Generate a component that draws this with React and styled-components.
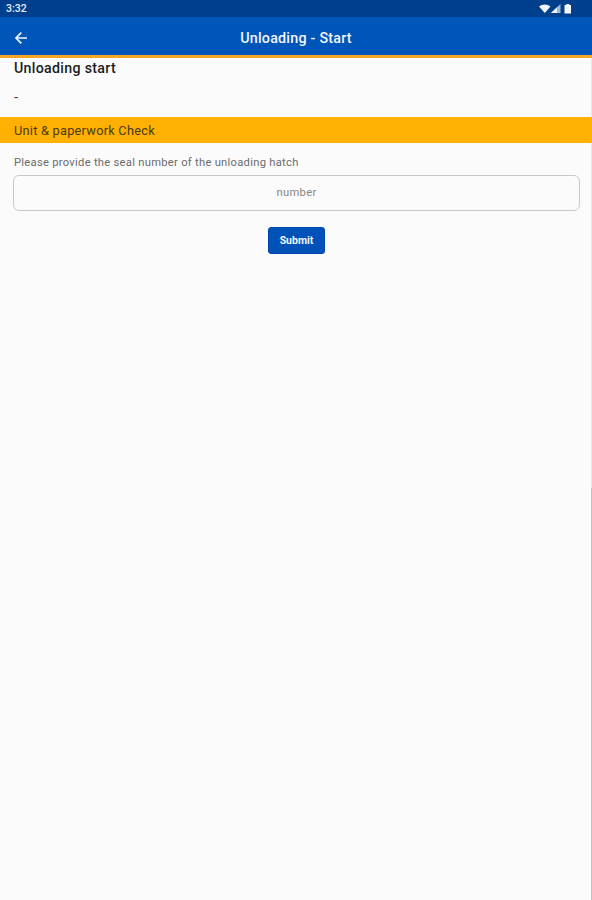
import React, { Component } from "react";
import styled, { createGlobalStyle } from "styled-components";

const GlobalStyle = createGlobalStyle`
  body {
    margin: 0;
    background-color: #fbfbfb;
    font-family: Roboto, sans-serif;
  }

  * {
    box-sizing: border-box;
  }
`

const Root = styled.div`
  width: 100%;
  height: 900px;
  display: flex;
  flex-direction: column;
  background-color: #fbfbfb;
  border-right: 1px solid;
  border-image: linear-gradient(#e9e9e9 488px, #c2c2c2 488px) 1;
`

const StatusBar = styled.div`
  height: 17px;
  margin-right: -1px;
  padding: 0 19px 0 6px;
  display: flex;
  flex-shrink: 0;
  align-items: center;
  justify-content: space-between;
  background-color: #003f8c;
  color: #e9effa;
`

const Clock = styled.span`
  font-size: 10.5px;
  font-weight: 500;
  line-height: 18px;
`

const StatusIcons = styled.svg`
  width: 34px;
  height: 11px;
  fill: #f4f7ff;
`

const AppBar = styled.header`
  height: 41px;
  margin-right: -1px;
  padding: 0 14px;
  display: grid;
  grid-template-columns: 14px 1fr 14px;
  flex-shrink: 0;
  align-items: center;
  background-color: #0055b8;
  border-bottom: 3px solid #f5a623;
`

const BackButton = styled.button`
  margin-top: 3px;
  padding: 0;
  display: flex;
  border: none;
  background: none;
  cursor: pointer;
`

const Title = styled.h1`
  margin: 3px 0 0;
  text-align: center;
  color: #f2f6ff;
  font-size: 14.3px;
  font-weight: 500;
  line-height: 18px;
  letter-spacing: 0.23px;
`

const Intro = styled.section`
  height: 59px;
  padding: 1px 14px 0;
  flex-shrink: 0;
  color: #1c1c1c;
`

const Heading = styled.h2`
  margin: 0;
  font-size: 14.2px;
  font-weight: 500;
  line-height: 19px;
  letter-spacing: 0.31px;
`

const Info = styled.p`
  margin: 10px 0 0;
  color: #444;
  font-size: 15px;
  line-height: 18px;
`

const SectionBar = styled.div`
  height: 26px;
  margin-right: -1px;
  padding: 1px 14px 0;
  flex-shrink: 0;
  background-color: #ffb000;
  color: #4b3a13;
  font-size: 12.8px;
  line-height: 26px;
  letter-spacing: 0.23px;
`

const Form = styled.form`
  padding: 12px 11px 0 13px;
  display: flex;
  flex-direction: column;
  align-items: center;
`

const Label = styled.label`
  width: 100%;
  padding-left: 1px;
  color: #6b6b6b;
  font-size: 11.2px;
  line-height: 16px;
  letter-spacing: 0.28px;
`

const Input = styled.input`
  width: 100%;
  height: 36px;
  margin-top: 4px;
  padding: 0 10px 2px;
  border: 1px solid #c9c9c9;
  border-radius: 6px;
  background-color: #fbfbfb;
  text-align: center;
  font-family: inherit;
  font-size: 11.2px;
  letter-spacing: 0.3px;

  &::placeholder {
    color: #858585;
    opacity: 1;
  }
`

const SubmitButton = styled.button`
  width: 57px;
  height: 27px;
  margin-top: 16px;
  padding: 0;
  border: 1px solid #0046ae;
  border-radius: 3px;
  background-color: #0052b8;
  color: #f4f7ff;
  font-family: inherit;
  font-size: 10.5px;
  font-weight: 700;
  cursor: pointer;
`

class App extends Component {

    state = { number: "" }

    handleSubmit = (event) => {
        event.preventDefault()
    }

    render() {
        return (
            <Root>
                <GlobalStyle />
                <StatusBar>
                    <Clock>3:32</Clock>
                    <StatusIcons viewBox="0 0 34 11">
                        <path d="M0 3.5C3 .7 8.500 .7 11.500 3.500L5.800 10Z" />
                        <path d="M12 10L21.500 1V10Z" opacity="0.65" />
                        <path d="M12 10L18 4.300V10Z" />
                        <path d="M25.500 2H27.300V1H30.300V2H32V10.500H25.500Z" />
                    </StatusIcons>
                </StatusBar>

                <AppBar>
                    <BackButton aria-label="Back">
                        <svg width="14" height="14" viewBox="0 0 14 14" fill="none" stroke="#f2f6ff" strokeWidth="1.7">
                            <path d="M13 7H2.500M7.300 1.700L2 7L7.300 12.300" />
                        </svg>
                    </BackButton>
                    <Title>Unloading - Start</Title>
                </AppBar>

                <Intro>
                    <Heading>Unloading start</Heading>
                    <Info>-</Info>
                </Intro>

                <SectionBar>Unit &amp; paperwork Check</SectionBar>

                <Form onSubmit={this.handleSubmit}>
                    <Label htmlFor="seal">Please provide the seal number of the unloading hatch</Label>
                    <Input
                        id="seal"
                        placeholder="number"
                        value={this.state.number}
                        onChange={(event) => this.setState({ number: event.target.value })}
                    />
                    <SubmitButton type="submit">Submit</SubmitButton>
                </Form>
            </Root>
        )
    }

}

export default App;
